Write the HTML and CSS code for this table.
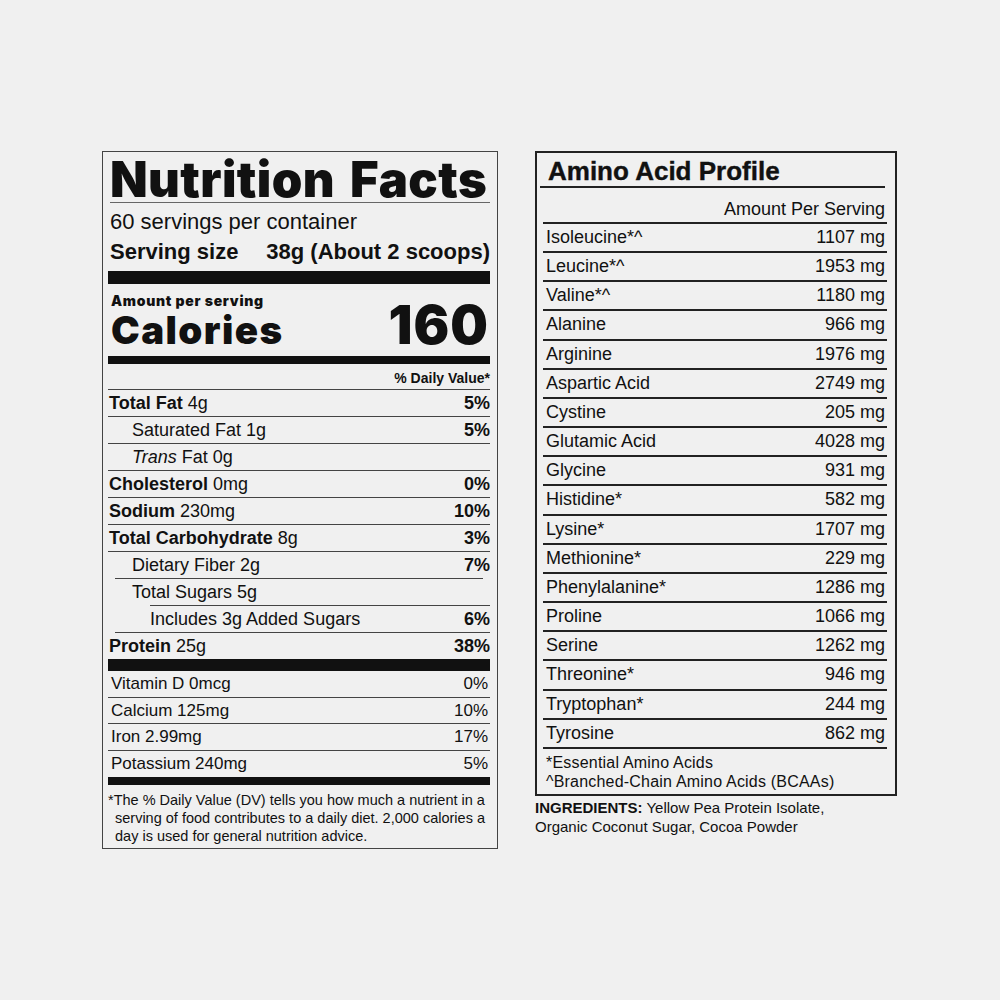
FILE: index.html
```html
<!DOCTYPE html>
<html lang="en">
<head>
<meta charset="utf-8">
<title>Nutrition Facts</title>
<link rel="stylesheet" href="styles.css">
</head>
<body>
<main class="page">
  <section class="nf">
    <h1 class="nf-title">Nutrition Facts</h1>
    <div class="nf-servings">60 servings per container</div>
    <div class="nf-size"><span>Serving size</span><span>38g (About 2 scoops)</span></div>
    <div class="bar bar-13"></div>
    <div class="nf-amount">Amount per serving</div>
    <div class="nf-cal"><span class="cal-label">Calories</span><span class="cal-num">160</span></div>
    <div class="bar bar-8"></div>
    <div class="nf-dv">% Daily Value*</div>
    <div class="nf-row"><span><b>Total Fat</b> 4g</span><b>5%</b></div>
    <div class="nf-row ind"><span>Saturated Fat 1g</span><b>5%</b></div>
    <div class="nf-row ind"><span><i>Trans</i> Fat 0g</span></div>
    <div class="nf-row"><span><b>Cholesterol</b> 0mg</span><b>0%</b></div>
    <div class="nf-row"><span><b>Sodium</b> 230mg</span><b>10%</b></div>
    <div class="nf-row"><span><b>Total Carbohydrate</b> 8g</span><b>3%</b></div>
    <div class="nf-row ind rule-mid"><span>Dietary Fiber 2g</span><b>7%</b></div>
    <div class="nf-row ind rule-deep"><span>Total Sugars 5g</span></div>
    <div class="nf-row ind2 rule-short"><span>Includes 3g Added Sugars</span><b>6%</b></div>
    <div class="nf-row last"><span><b>Protein</b> 25g</span><b>38%</b></div>
    <div class="bar bar-12"></div>
    <div class="nf-vit"><span>Vitamin D 0mcg</span><span>0%</span></div>
    <div class="nf-vit"><span>Calcium 125mg</span><span>10%</span></div>
    <div class="nf-vit"><span>Iron 2.99mg</span><span>17%</span></div>
    <div class="nf-vit last"><span>Potassium 240mg</span><span>5%</span></div>
    <div class="bar bar-8"></div>
    <p class="nf-foot">*The % Daily Value (DV) tells you how much a nutrient in a<br>serving of food contributes to a daily diet. 2,000 calories a<br>day is used for general nutrition advice.</p>
  </section>

  <div class="aa-col">
    <section class="aa">
      <h2 class="aa-title">Amino Acid Profile</h2>
      <div class="aa-head">Amount Per Serving</div>
      <div class="aa-row"><span>Isoleucine*^</span><span>1107 mg</span></div>
      <div class="aa-row"><span>Leucine*^</span><span>1953 mg</span></div>
      <div class="aa-row"><span>Valine*^</span><span>1180 mg</span></div>
      <div class="aa-row"><span>Alanine</span><span>966 mg</span></div>
      <div class="aa-row"><span>Arginine</span><span>1976 mg</span></div>
      <div class="aa-row"><span>Aspartic Acid</span><span>2749 mg</span></div>
      <div class="aa-row"><span>Cystine</span><span>205 mg</span></div>
      <div class="aa-row"><span>Glutamic Acid</span><span>4028 mg</span></div>
      <div class="aa-row"><span>Glycine</span><span>931 mg</span></div>
      <div class="aa-row"><span>Histidine*</span><span>582 mg</span></div>
      <div class="aa-row"><span>Lysine*</span><span>1707 mg</span></div>
      <div class="aa-row"><span>Methionine*</span><span>229 mg</span></div>
      <div class="aa-row"><span>Phenylalanine*</span><span>1286 mg</span></div>
      <div class="aa-row"><span>Proline</span><span>1066 mg</span></div>
      <div class="aa-row"><span>Serine</span><span>1262 mg</span></div>
      <div class="aa-row"><span>Threonine*</span><span>946 mg</span></div>
      <div class="aa-row"><span>Tryptophan*</span><span>244 mg</span></div>
      <div class="aa-row"><span>Tyrosine</span><span>862 mg</span></div>
      <p class="aa-foot">*Essential Amino Acids<br>^Branched-Chain Amino Acids (BCAAs)</p>
    </section>
    <p class="ingr"><b>INGREDIENTS:</b> Yellow Pea Protein Isolate,<br>Organic Coconut Sugar, Cocoa Powder</p>
  </div>
</main>
</body>
</html>
```
FILE: styles.css
```css
* { box-sizing: border-box; }
html, body { margin: 0; padding: 0; background: #f0f0f0; }
body {
  font-family: "Liberation Sans", Arial, sans-serif;
  color: #111;
}
.page {
  display: flex;
  align-items: flex-start;
  gap: 37px;
  padding: 151px 0 0 102px;
}

/* ---------- Nutrition facts panel ---------- */
.nf {
  width: 396px;
  border: 1px solid #444;
  padding: 0 7px 3px 5px;
}
.nf-title {
  margin: 0 0 0 2px;
  padding-top: 6px;
  font-family: Inter, "Liberation Sans", sans-serif;
  font-size: 49px;
  line-height: 44px;
  font-weight: 900;
  letter-spacing: 0.4px;
  word-spacing: 5px;
  white-space: nowrap;
  border-bottom: 1px solid #666;
}
.nf-servings {
  margin-top: 4px;
  padding-left: 2px;
  font-size: 22px;
  line-height: 30px;
}
.nf-size {
  display: flex;
  justify-content: space-between;
  padding-left: 2px;
  font-size: 22px;
  font-weight: 700;
  line-height: 30px;
}
.bar { background: #111; }
.bar-13 { height: 13px; margin-top: 4px; }
.bar-12 { height: 12px; }
.bar-8 { height: 8px; }
.nf-amount {
  margin-top: 9px;
  padding-left: 3px;
  font-family: Inter, "Liberation Sans", sans-serif;
  font-weight: 900;
  font-size: 14px;
  line-height: 15px;
  letter-spacing: 0.7px;
}
.nf-cal {
  display: flex;
  justify-content: space-between;
  align-items: baseline;
  padding: 0 2px 0 3px;
  line-height: 34px;
  height: 48px;
  font-family: Inter, "Liberation Sans", sans-serif;
  font-weight: 900;
}
.cal-label {
  font-size: 38.5px;
  letter-spacing: 1.4px;
}
.cal-num {
  font-size: 53px;
  letter-spacing: 1px;
  margin-right: -1px;
}
.nf-dv {
  text-align: right;
  font-size: 14px;
  font-weight: 700;
  line-height: 18px;
  padding: 5px 0 2px;
  border-bottom: 1px solid #444;
}
.nf-row {
  display: flex;
  justify-content: space-between;
  height: 27px;
  line-height: 26px;
  font-size: 18px;
  padding: 0 0 0 1px;
  background: linear-gradient(#444, #444) no-repeat left bottom / 100% 1px;
}
.nf-row.ind { padding-left: 24px; }
.nf-row.ind2 { padding-left: 42px; }
.nf-row.rule-mid { background-position: center bottom; background-size: calc(100% - 14px) 1px; }
.nf-row.rule-deep { background-position: right bottom; background-size: calc(100% - 42px) 1px; }
.nf-row.rule-short { background-position: right bottom; background-size: calc(100% - 7px) 1px; }
.nf-row.last { background: none; height: 26px; }
.nf-vit {
  display: flex;
  justify-content: space-between;
  height: 26.5px;
  line-height: 25.5px;
  font-size: 17px;
  padding: 0 2px 0 3px;
  background: linear-gradient(#444, #444) no-repeat left bottom / 100% 1px;
}
.nf-vit.last { background: none; }
.nf-foot {
  margin: 6px 0 0;
  padding-left: 7px;
  text-indent: -7px;
  font-size: 14.5px;
  line-height: 18px;
}

/* ---------- Amino acid panel ---------- */
.aa-col {
  display: flex;
  flex-direction: column;
  width: 362px;
}
.aa {
  border: 2px solid #222;
  padding: 0 8px 3px 6px;
}
.aa-title {
  margin: 0 2px 0 -3px;
  padding: 4px 0 0 8px;
  font-size: 26px;
  line-height: 29px;
  font-weight: 700;
  -webkit-text-stroke: 0.4px #111;
  border-bottom: 2px solid #222;
}
.aa-head {
  margin-top: 9px;
  text-align: right;
  padding-right: 2px;
  font-size: 18px;
  line-height: 24px;
  padding-bottom: 1px;
  border-bottom: 2px solid #222;
}
.aa-row {
  display: flex;
  justify-content: space-between;
  height: 29.17px;
  line-height: 27.17px;
  font-size: 18px;
  padding: 0 2px 0 3px;
  border-bottom: 2px solid #222;
}
.aa-foot {
  margin: 4px 0 0;
  padding-left: 3px;
  font-size: 16px;
  line-height: 19px;
  letter-spacing: 0.2px;
}
.ingr {
  margin: 2px 0 0;
  font-size: 15px;
  line-height: 19px;
}
```
